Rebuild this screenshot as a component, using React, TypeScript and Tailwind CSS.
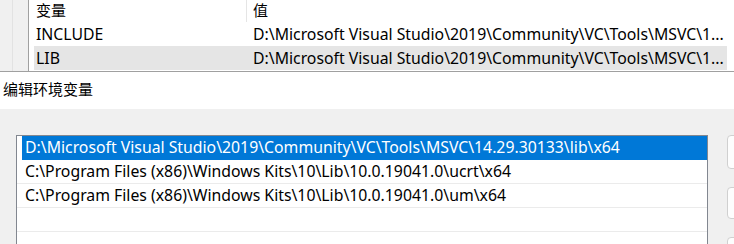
import React from "react";

const font = { fontFamily: '"Noto Sans", "Noto Sans CJK SC", sans-serif' };

export default function App() {
  const rows = [
    "D:\\Microsoft Visual Studio\\2019\\Community\\VC\\Tools\\MSVC\\14.29.30133\\lib\\x64",
    "C:\\Program Files (x86)\\Windows Kits\\10\\Lib\\10.0.19041.0\\ucrt\\x64",
    "C:\\Program Files (x86)\\Windows Kits\\10\\Lib\\10.0.19041.0\\um\\x64",
    "",
    "",
  ];
  return (
    <div
      className="w-[734px] h-[244px] overflow-hidden bg-white text-[15px] text-black flex flex-col"
      style={font}
    >
      {/* top list view */}
      <div className="h-[72px] flex border-b border-[#a0a0a0] shrink-0">
        <div className="w-[13px] bg-[#f0f0f0] border-r border-[#e2e2e2] shrink-0" />
        <div className="w-[16px] bg-[#f0f0f0] border-r border-[#a0a0a0] shrink-0" />
        <div className="flex-1 flex flex-col pl-[5px] pr-[7px]">
          <div className="h-[22px] flex shrink-0">
            <div className="w-[213px] pl-[2px] border-r border-[#e5e5e5] leading-[21px] h-[22px] shrink-0">
              变量
            </div>
            <div className="pl-[6px] leading-[21px]">值</div>
          </div>
          <div className="h-[24px] flex leading-[24px] text-[15.8px] shrink-0">
            <div className="w-[219px] pl-[2px] shrink-0">INCLUDE</div>
            <div className="whitespace-nowrap overflow-hidden">
              D:\Microsoft Visual Studio\2019\Community\VC\Tools\MSVC\1...
            </div>
          </div>
          <div className="h-[24px] flex leading-[24px] text-[15.8px] bg-[#e5e5e5] shrink-0">
            <div className="w-[219px] pl-[2px] shrink-0">LIB</div>
            <div className="whitespace-nowrap overflow-hidden">
              D:\Microsoft Visual Studio\2019\Community\VC\Tools\MSVC\1...
            </div>
          </div>
        </div>
      </div>

      {/* title */}
      <div className="h-[37px] shrink-0 pl-[3px] pt-[7px] leading-[20px]">编辑环境变量</div>

      {/* dialog body */}
      <div className="flex-1 bg-[#f0f0f0] flex pt-[26px] pl-[16px]">
        <div className="w-[692px] h-[140px] bg-white border border-[#828790] shrink-0 overflow-hidden text-[15.8px]">
          {rows.map((r, i) => (
            <div
              key={i}
              className={
                i === 0
                  ? "h-[24px] leading-[23px] whitespace-nowrap pl-[3px] bg-[#0078d7] text-white border-b border-[#0078d7] ml-[5px]"
                  : "h-[24px] leading-[23px] whitespace-nowrap pl-[8px] border-b border-[#ebebeb]"
              }
            >
              {r}
            </div>
          ))}
        </div>
        <div className="ml-[19px] flex flex-col gap-[18px]">
          <div className="w-[40px] h-[34px] bg-[#fdfdfd] border border-[#d0d0d0] rounded-[4px]" />
          <div className="w-[40px] h-[32px] bg-[#fdfdfd] border border-[#d0d0d0] rounded-[4px]" />
          <div className="w-[40px] h-[32px] bg-[#fdfdfd] border border-[#d0d0d0] rounded-[4px]" />
        </div>
      </div>
    </div>
  );
}
